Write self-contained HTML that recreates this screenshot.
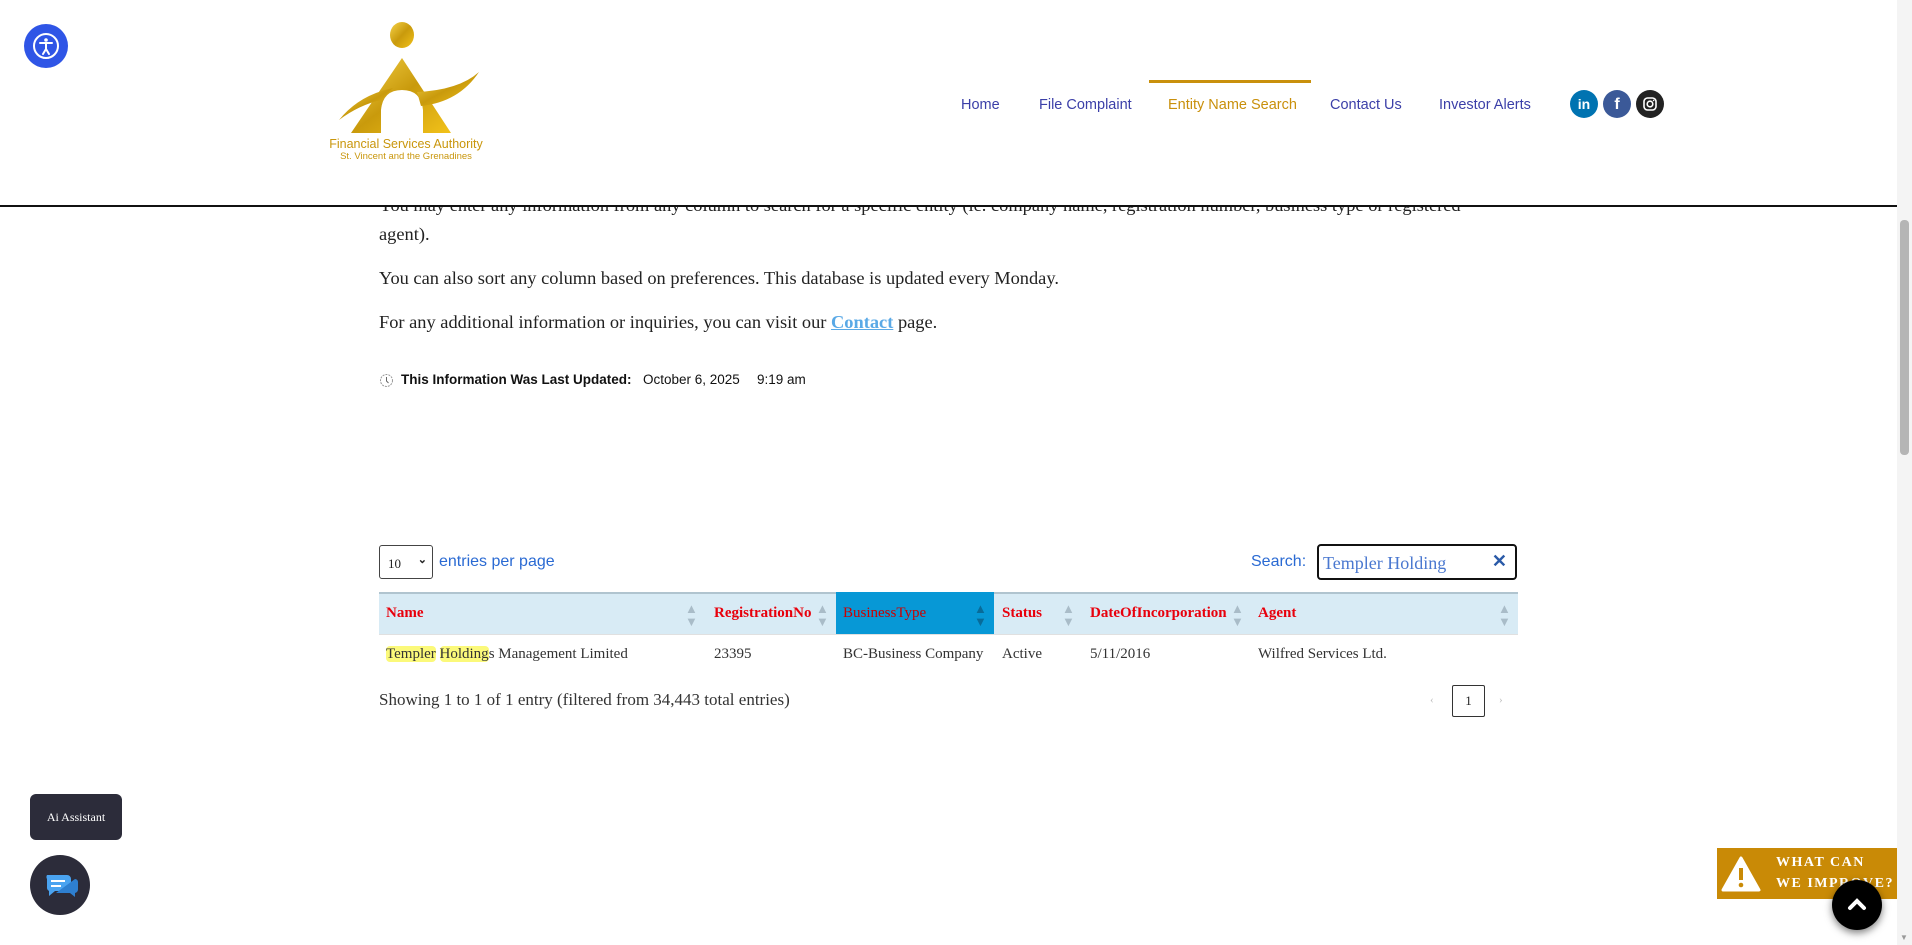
<!DOCTYPE html>
<html><head><meta charset="utf-8"><style>
*{box-sizing:border-box;margin:0;padding:0}
body{width:1912px;height:945px;overflow:hidden;background:#fff;font-family:"Liberation Serif",serif;position:relative;color:#222}
.abs{position:absolute}
.sans{font-family:"Liberation Sans",sans-serif}
.nav{top:97px;font-size:14.5px;color:#3b3fa8}
.p{left:379px;font-size:18.4px;color:#222;white-space:nowrap}
</style></head><body>
<div class="abs" style="left:0;top:0;width:1897px;height:207px;background:#fff;border-bottom:2px solid #111;z-index:2"></div>
<div class="abs" style="left:24px;top:24px;width:44px;height:44px;border-radius:50%;background:#2f55e6;z-index:3;display:flex;align-items:center;justify-content:center">
<svg width="30" height="30" viewBox="0 0 30 30"><circle cx="15" cy="15" r="12" fill="none" stroke="#fff" stroke-width="2"/><circle cx="15" cy="9" r="1.8" fill="#fff"/><path d="M9 12h12M15 12v6l-3 5M15 18l3 5" stroke="#fff" stroke-width="2" fill="none" stroke-linecap="round"/></svg></div>
<svg class="abs" style="left:309px;top:20px;z-index:3" width="195" height="145" viewBox="0 0 195 145">
<defs><linearGradient id="g" x1="0" x2="1" y1="0" y2="1"><stop offset="0" stop-color="#f6d34a"/><stop offset=".5" stop-color="#c99a0c"/><stop offset="1" stop-color="#f2c21a"/></linearGradient></defs>
<ellipse cx="93" cy="15" rx="12" ry="13" fill="url(#g)"/>
<path d="M93 38 L42 113 L72 113 L72 90 Q74 70 93 70 Q112 70 114 90 L114 113 L142 113 Z" fill="url(#g)"/>
<path d="M30 100 Q50 75 84 68 L72 80 Q50 85 30 100Z" fill="url(#g)"/>
<path d="M108 72 Q150 70 170 52 Q150 82 112 86Z" fill="url(#g)"/>
<text x="97" y="128" text-anchor="middle" font-family="Liberation Sans" font-size="12.5" fill="#c9960c">Financial Services Authority</text>
<text x="97" y="139" text-anchor="middle" font-family="Liberation Sans" font-size="9.5" fill="#c9960c">St. Vincent and the Grenadines</text>
</svg>
<div class="abs sans nav" style="left:961px;z-index:3">Home</div>
<div class="abs sans nav" style="left:1039px;z-index:3">File Complaint</div>
<div class="abs" style="left:1149px;top:80px;width:162px;height:3px;background:#c9900c;z-index:3"></div>
<div class="abs sans nav" style="left:1168px;color:#c9900c;z-index:3">Entity Name Search</div>
<div class="abs sans nav" style="left:1330px;z-index:3">Contact Us</div>
<div class="abs sans nav" style="left:1439px;z-index:3">Investor Alerts</div>
<div class="abs sans" style="left:1570px;top:90px;width:28px;height:28px;border-radius:50%;background:#0073b1;color:#fff;font-weight:bold;font-size:14px;text-align:center;line-height:28px;z-index:3">in</div>
<div class="abs sans" style="left:1603px;top:90px;width:28px;height:28px;border-radius:50%;background:#3b5998;color:#fff;font-weight:bold;font-size:16px;text-align:center;line-height:29px;z-index:3">f</div>
<div class="abs" style="left:1636px;top:90px;width:28px;height:28px;border-radius:50%;background:#222;z-index:3"><svg width="28" height="28"><rect x="8" y="8" width="12" height="12" rx="3.5" fill="none" stroke="#fff" stroke-width="1.6"/><circle cx="14" cy="14" r="2.8" fill="none" stroke="#fff" stroke-width="1.6"/><circle cx="17.6" cy="10.4" r=".8" fill="#fff"/></svg></div>
<div class="abs p" style="top:195px;z-index:1">You may enter any information from any column to search for a specific entity (ie. company name, registration number, business type or registered</div>
<div class="abs p" style="top:224px">agent).</div>
<div class="abs p" style="top:268px">You can also sort any column based on preferences. This database is updated every Monday.</div>
<div class="abs p" style="top:312px">For any additional information or inquiries, you can visit our <span style="color:#5aa9e6;text-decoration:underline;font-weight:bold">Contact</span> page.</div>
<svg class="abs" style="left:379px;top:373px" width="15" height="15"><circle cx="7.5" cy="7.5" r="6" fill="none" stroke="#999" stroke-width="1" stroke-dasharray="2 1"/><path d="M7.5 4v4l2 2" stroke="#666" fill="none"/></svg>
<div class="abs sans" style="left:401px;top:372px;font-size:13.5px;font-weight:bold;color:#111">This Information Was Last Updated:</div>
<div class="abs sans" style="left:643px;top:372px;font-size:13.5px;color:#111">October 6, 2025</div>
<div class="abs sans" style="left:757px;top:372px;font-size:13.5px;color:#111">9:19 am</div>
<div class="abs" style="left:379px;top:545px;width:54px;height:34px;border:1px solid #444;border-radius:3px;font-size:13px;padding:10px 0 0 8px">10<span class="sans" style="position:absolute;right:5px;top:7px;font-size:11px;font-weight:bold">&#8964;</span></div>
<div class="abs sans" style="left:439px;top:553px;font-size:16px;color:#2a6ad3">entries per page</div>
<div class="abs sans" style="left:1251px;top:553px;font-size:16px;color:#2a6ad3">Search:</div>
<div class="abs" style="left:1317px;top:544px;width:200px;height:36px;border:2px solid #111;border-radius:4px;font-size:18px;color:#4a78d0;padding:7px 0 0 4px">Templer Holding<span class="sans" style="position:absolute;right:8px;top:5px;font-weight:bold;color:#2a5aa8">✕</span></div>
<div class="abs" style="left:379px;top:592px;width:1139px;height:42px;background:#d8ebf5;border-top:2px solid #b0c4cf"></div>
<div class="abs" style="left:836px;top:592px;width:158px;height:42px;background:#0798d6"></div>
<div class="abs" style="left:379px;top:634px;width:1139px;height:1px;background:#e0e0e0"></div>
<div style="position:absolute;top:605px;left:0;font-size:15px;color:#e8000c;font-weight:bold">
<span class="abs" style="left:386px">Name</span>
<span class="abs" style="left:714px">RegistrationNo</span>
<span class="abs" style="left:843px;color:#c00;font-weight:normal">BusinessType</span>
<span class="abs" style="left:1002px">Status</span>
<span class="abs" style="left:1090px">DateOfIncorporation</span>
<span class="abs" style="left:1258px">Agent</span>
</div>
<div style="position:absolute;top:602px;left:0;color:#a9bcc8;font-size:13px;line-height:13px">
<span class="abs" style="left:685px">▲<br>▼</span><span class="abs" style="left:816px">▲<br>▼</span><span class="abs" style="left:974px;color:#086b99">▲<br>▼</span><span class="abs" style="left:1062px">▲<br>▼</span><span class="abs" style="left:1231px">▲<br>▼</span><span class="abs" style="left:1498px">▲<br>▼</span>
</div>
<div style="position:absolute;top:646px;left:0;font-size:15px;color:#333">
<span class="abs" style="left:386px;white-space:nowrap"><span style="background:#fbf97a;border-radius:4px">Templer</span> <span style="background:#fbf97a;border-radius:4px">Holding</span>s Management Limited</span>
<span class="abs" style="left:714px">23395</span>
<span class="abs" style="left:843px;white-space:nowrap">BC-Business Company</span>
<span class="abs" style="left:1002px">Active</span>
<span class="abs" style="left:1090px">5/11/2016</span>
<span class="abs" style="left:1258px;white-space:nowrap">Wilfred Services Ltd.</span>
</div>
<div class="abs" style="left:379px;top:690px;font-size:17px;color:#333;white-space:nowrap">Showing 1 to 1 of 1 entry (filtered from 34,443 total entries)</div>
<div class="abs" style="left:1430px;top:694px;font-size:11px;color:#bbb">‹</div>
<div class="abs" style="left:1452px;top:685px;width:33px;height:32px;border:1px solid #333;border-radius:2px;font-size:13px;text-align:center;line-height:30px">1</div>
<div class="abs" style="left:1499px;top:694px;font-size:11px;color:#bbb">›</div>
<div class="abs" style="left:30px;top:794px;width:92px;height:46px;background:#2c2c3a;border-radius:6px;color:#fff;font-size:12px;text-align:center;line-height:46px">Ai Assistant</div>
<div class="abs" style="left:30px;top:855px;width:60px;height:60px;border-radius:50%;background:#2c2c3a"><svg width="60" height="60"><path d="M17 20h20a4 4 0 0 1 4 4v8a4 4 0 0 1-4 4h-12l-6 5v-5a4 4 0 0 1-2-4v-8a4 4 0 0 1 0-4z" fill="#4aa3f0"/><path d="M26 38h14l5 4v-4a4 4 0 0 0 3-4v-7a3 3 0 0 0-3-3" fill="#2e7fd0"/><path d="M21 26h14M21 31h10" stroke="#fff" stroke-width="2"/></svg></div>
<div class="abs" style="left:1717px;top:848px;width:180px;height:51px;background:#c98a06"></div>
<svg class="abs" style="left:1721px;top:856px" width="40" height="36"><path d="M20 2L38 34H2Z" fill="#fff" stroke="#fff" stroke-linejoin="round" stroke-width="3"/><rect x="18" y="12" width="4" height="12" fill="#c98a06"/><circle cx="20" cy="29" r="2.3" fill="#c98a06"/></svg>
<div class="abs" style="left:1776px;top:852px;color:#fff;font-size:14px;letter-spacing:1.5px;line-height:21px;font-weight:bold;white-space:nowrap">WHAT CAN<br>WE IMPROVE?</div>
<div class="abs" style="left:1832px;top:880px;width:50px;height:50px;border-radius:50%;background:#000;box-shadow:0 3px 8px rgba(0,0,0,.5)"><svg width="50" height="50"><path d="M18 28l7-7 7 7" stroke="#fff" stroke-width="4" fill="none" stroke-linecap="round"/></svg></div>
<div class="abs" style="left:1897px;top:0;width:15px;height:945px;background:#f4f4f4"></div>
<div class="abs" style="left:1900px;top:220px;width:9px;height:235px;background:#b5b5b5;border-radius:4px"></div>
<div class="abs" style="left:1900px;top:933px;font-size:8px;color:#999">▼</div>
</body></html>
